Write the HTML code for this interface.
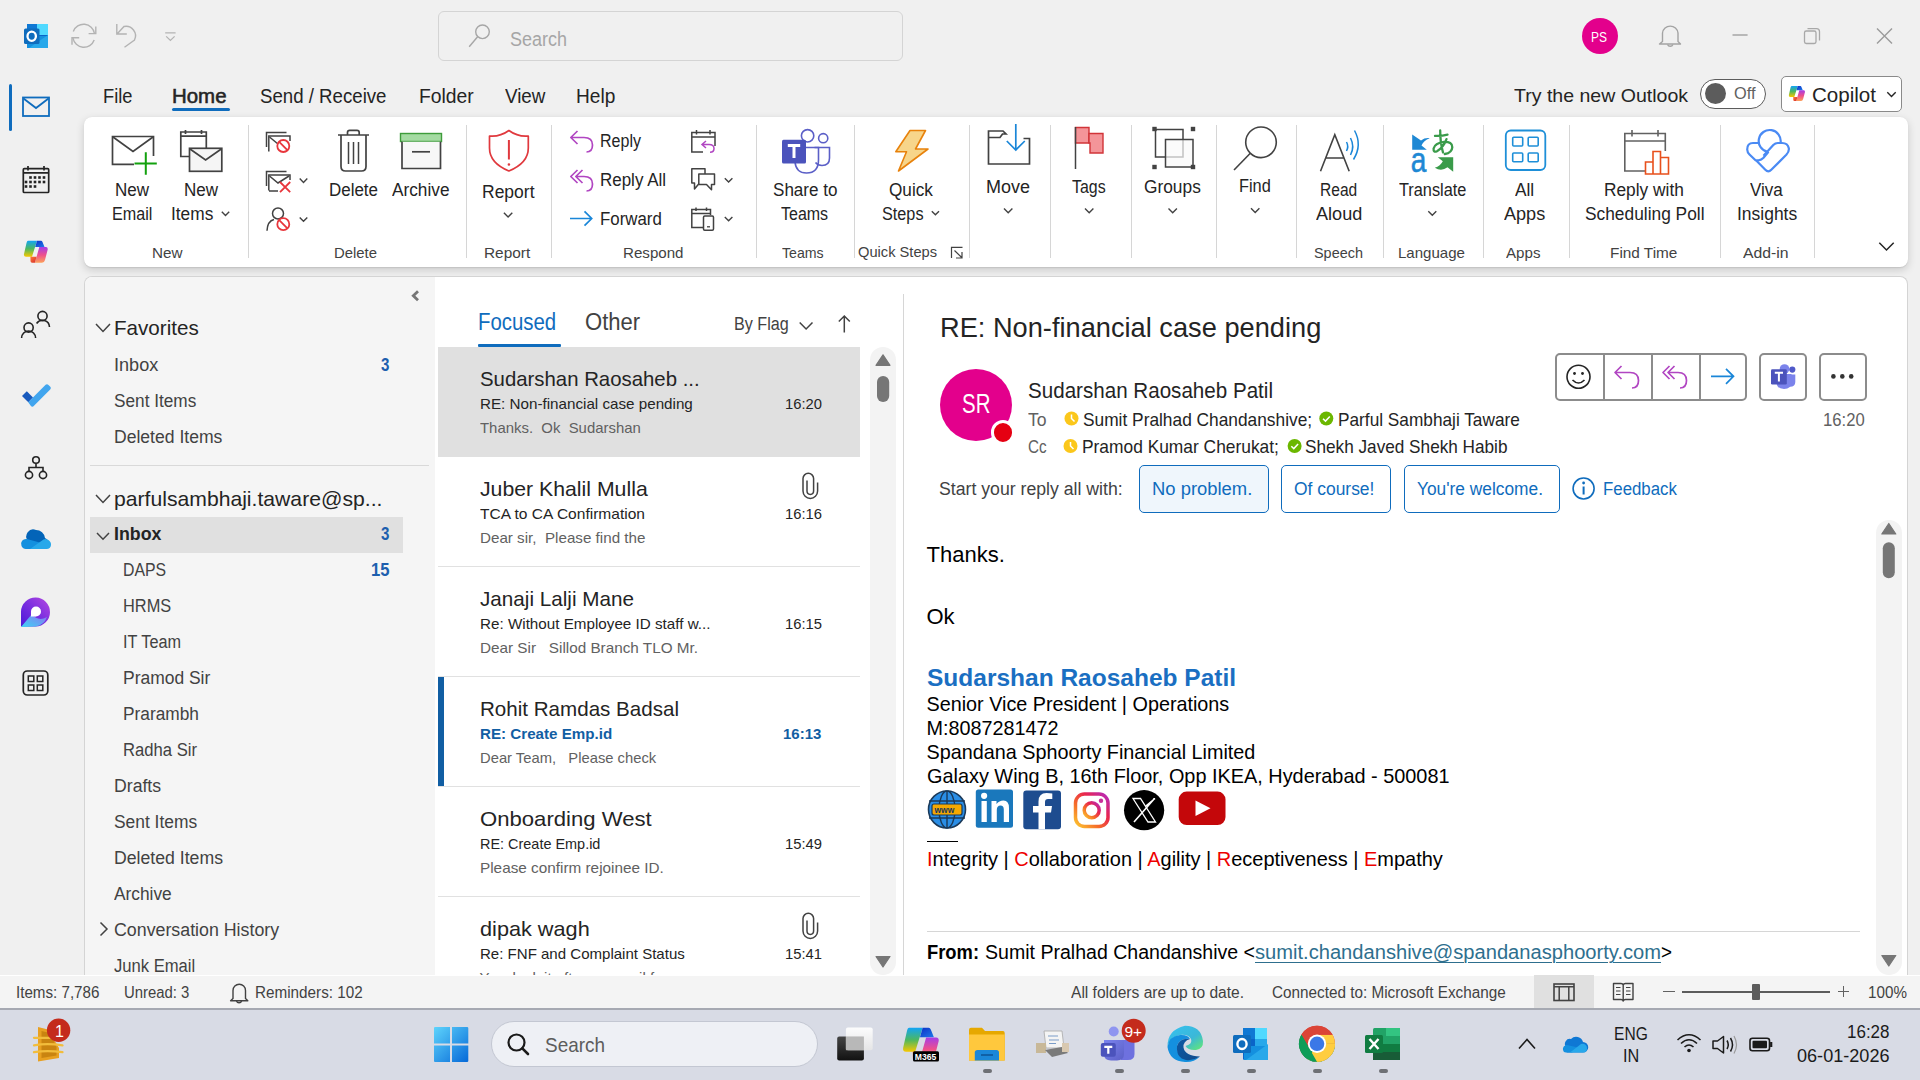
<!DOCTYPE html>
<html><head><meta charset="utf-8"><title>Outlook</title>
<style>
html,body{margin:0;padding:0;width:1920px;height:1080px;overflow:hidden;background:#f0f0f0;position:relative;font-family:"Liberation Sans",sans-serif}
.t{position:absolute;white-space:pre;font-family:"Liberation Sans",sans-serif}
.r{position:absolute;box-sizing:border-box}
svg.r{overflow:visible}
</style></head><body>
<div class="r" style="left:438px;top:11px;width:465px;height:50px;background:transparent;border:1px solid #d4d4d4;border-radius:6px"></div>
<div class="r" style="left:9px;top:84px;width:3px;height:47px;background:#0f6cbd;border-radius:2px"></div>
<div class="r" style="left:172px;top:108px;width:58px;height:3px;background:#0f6cbd;border-radius:2px"></div>
<div class="r" style="left:84px;top:117px;width:1824px;height:150px;background:#ffffff;border-radius:8px;box-shadow:0 0.5px 1px rgba(0,0,0,0.08), 0 3px 8px rgba(0,0,0,0.16)"></div>
<div class="r" style="left:84px;top:276px;width:1824px;height:700px;background:#ffffff;border:1px solid #d4d4d4;border-bottom:none;border-radius:8px 8px 0 0;overflow:hidden"></div>
<div class="r" style="left:85px;top:277px;width:350px;height:698px;background:#f5f5f5;border-radius:7px 0 0 0"></div>
<div class="t" style="left:510.0px;top:28.6px;font-size:20px;line-height:20px;color:#a6a6a6;font-weight:normal;transform:scaleX(0.8995);transform-origin:0 0;">Search</div>
<div class="r" style="left:1582px;top:18px;width:36px;height:36px;background:#e3008c;border-radius:50%"></div>
<div class="t" style="left:1590.5px;top:28.9px;font-size:15px;line-height:15px;color:#ffffff;font-weight:normal;transform:scaleX(0.7996);transform-origin:0 0;">PS</div>
<div class="t" style="left:103.0px;top:86.1px;font-size:20px;line-height:20px;color:#242424;font-weight:normal;transform:scaleX(0.9153);transform-origin:0 0;">File</div>
<div class="t" style="left:171.5px;top:86.1px;font-size:20px;line-height:20px;color:#242424;font-weight:normal;transform:scaleX(1.0215);transform-origin:0 0;-webkit-text-stroke:0.55px #242424">Home</div>
<div class="t" style="left:259.5px;top:86.1px;font-size:20px;line-height:20px;color:#242424;font-weight:normal;transform:scaleX(0.9326);transform-origin:0 0;">Send / Receive</div>
<div class="t" style="left:419.0px;top:86.1px;font-size:20px;line-height:20px;color:#242424;font-weight:normal;transform:scaleX(0.9657);transform-origin:0 0;">Folder</div>
<div class="t" style="left:504.6px;top:86.1px;font-size:20px;line-height:20px;color:#242424;font-weight:normal;transform:scaleX(0.9397);transform-origin:0 0;">View</div>
<div class="t" style="left:575.9px;top:86.1px;font-size:20px;line-height:20px;color:#242424;font-weight:normal;transform:scaleX(0.9554);transform-origin:0 0;">Help</div>
<div class="t" style="left:1514.4px;top:85.8px;font-size:19px;line-height:19px;color:#242424;font-weight:normal;transform:scaleX(1.0277);transform-origin:0 0;">Try the new Outlook</div>
<div class="r" style="left:1700px;top:79px;width:66px;height:30px;background:#ffffff;border:1px solid #5c5c5c;border-radius:15px"></div>
<div class="r" style="left:1705px;top:83px;width:21px;height:21px;background:#5c5c5c;border-radius:50%"></div>
<div class="t" style="left:1733.5px;top:85.9px;font-size:16px;line-height:16px;color:#616161;font-weight:normal;transform:scaleX(1.0215);transform-origin:0 0;">Off</div>
<div class="r" style="left:1781px;top:76px;width:121px;height:36px;background:#ffffff;border:1px solid #8a8a8a;border-radius:5px"></div>
<div class="t" style="left:1812.0px;top:86.3px;font-size:19.5px;line-height:19.5px;color:#242424;font-weight:normal;transform:scaleX(1.0543);transform-origin:0 0;">Copilot</div>
<div class="t" style="left:114.7px;top:182.0px;font-size:17.5px;line-height:17.5px;color:#242424;font-weight:normal;transform:scaleX(0.9712);transform-origin:0 0;">New</div>
<div class="t" style="left:112.3px;top:206.2px;font-size:17.5px;line-height:17.5px;color:#242424;font-weight:normal;transform:scaleX(0.9233);transform-origin:0 0;">Email</div>
<div class="t" style="left:184.0px;top:182.0px;font-size:17.5px;line-height:17.5px;color:#242424;font-weight:normal;transform:scaleX(0.9712);transform-origin:0 0;">New</div>
<div class="t" style="left:170.7px;top:206.2px;font-size:17.5px;line-height:17.5px;color:#242424;font-weight:normal;transform:scaleX(0.9886);transform-origin:0 0;">Items</div>
<div class="t" style="left:151.9px;top:245.3px;font-size:15px;line-height:15px;color:#424242;font-weight:normal;transform:scaleX(1.0164);transform-origin:0 0;">New</div>
<div class="t" style="left:329.0px;top:182.0px;font-size:17.5px;line-height:17.5px;color:#242424;font-weight:normal;transform:scaleX(0.9686);transform-origin:0 0;">Delete</div>
<div class="t" style="left:391.5px;top:182.0px;font-size:17.5px;line-height:17.5px;color:#242424;font-weight:normal;transform:scaleX(0.9854);transform-origin:0 0;">Archive</div>
<div class="t" style="left:334.0px;top:245.3px;font-size:15px;line-height:15px;color:#424242;font-weight:normal;transform:scaleX(0.9917);transform-origin:0 0;">Delete</div>
<div class="t" style="left:481.5px;top:184.1px;font-size:17.5px;line-height:17.5px;color:#242424;font-weight:normal;transform:scaleX(0.9995);transform-origin:0 0;">Report</div>
<div class="t" style="left:483.6px;top:244.9px;font-size:15px;line-height:15px;color:#424242;font-weight:normal;transform:scaleX(1.0262);transform-origin:0 0;">Report</div>
<div class="t" style="left:600.2px;top:133.0px;font-size:17.5px;line-height:17.5px;color:#242424;font-weight:normal;transform:scaleX(0.9164);transform-origin:0 0;">Reply</div>
<div class="t" style="left:600.2px;top:172.0px;font-size:17.5px;line-height:17.5px;color:#242424;font-weight:normal;transform:scaleX(0.9694);transform-origin:0 0;">Reply All</div>
<div class="t" style="left:600.2px;top:210.9px;font-size:17.5px;line-height:17.5px;color:#242424;font-weight:normal;transform:scaleX(0.9621);transform-origin:0 0;">Forward</div>
<div class="t" style="left:622.5px;top:244.9px;font-size:15px;line-height:15px;color:#424242;font-weight:normal;transform:scaleX(1.0076);transform-origin:0 0;">Respond</div>
<div class="t" style="left:772.5px;top:182.0px;font-size:17.5px;line-height:17.5px;color:#242424;font-weight:normal;transform:scaleX(0.9750);transform-origin:0 0;">Share to</div>
<div class="t" style="left:780.9px;top:205.9px;font-size:17.5px;line-height:17.5px;color:#242424;font-weight:normal;transform:scaleX(0.9138);transform-origin:0 0;">Teams</div>
<div class="t" style="left:782.3px;top:244.9px;font-size:15px;line-height:15px;color:#424242;font-weight:normal;transform:scaleX(0.9439);transform-origin:0 0;">Teams</div>
<div class="t" style="left:888.6px;top:182.0px;font-size:17.5px;line-height:17.5px;color:#242424;font-weight:normal;transform:scaleX(0.9814);transform-origin:0 0;">Quick</div>
<div class="t" style="left:881.7px;top:206.2px;font-size:17.5px;line-height:17.5px;color:#242424;font-weight:normal;transform:scaleX(0.9274);transform-origin:0 0;">Steps</div>
<div class="t" style="left:857.9px;top:243.8px;font-size:15px;line-height:15px;color:#424242;font-weight:normal;transform:scaleX(0.9782);transform-origin:0 0;">Quick Steps</div>
<div class="t" style="left:986.0px;top:179.0px;font-size:17.5px;line-height:17.5px;color:#242424;font-weight:normal;transform:scaleX(1.0282);transform-origin:0 0;">Move</div>
<div class="t" style="left:1071.7px;top:179.0px;font-size:17.5px;line-height:17.5px;color:#242424;font-weight:normal;transform:scaleX(0.9090);transform-origin:0 0;">Tags</div>
<div class="t" style="left:1143.5px;top:179.0px;font-size:17.5px;line-height:17.5px;color:#242424;font-weight:normal;transform:scaleX(0.9897);transform-origin:0 0;">Groups</div>
<div class="t" style="left:1239.0px;top:178.4px;font-size:17.5px;line-height:17.5px;color:#242424;font-weight:normal;transform:scaleX(0.9341);transform-origin:0 0;">Find</div>
<div class="t" style="left:1319.8px;top:182.0px;font-size:17.5px;line-height:17.5px;color:#242424;font-weight:normal;transform:scaleX(0.8892);transform-origin:0 0;">Read</div>
<div class="t" style="left:1315.5px;top:206.2px;font-size:17.5px;line-height:17.5px;color:#242424;font-weight:normal;transform:scaleX(1.0345);transform-origin:0 0;">Aloud</div>
<div class="t" style="left:1313.5px;top:245.3px;font-size:15px;line-height:15px;color:#424242;font-weight:normal;transform:scaleX(0.9612);transform-origin:0 0;">Speech</div>
<div class="t" style="left:1398.6px;top:182.0px;font-size:17.5px;line-height:17.5px;color:#242424;font-weight:normal;transform:scaleX(0.9322);transform-origin:0 0;">Translate</div>
<div class="t" style="left:1398.0px;top:245.3px;font-size:15px;line-height:15px;color:#424242;font-weight:normal;transform:scaleX(1.0039);transform-origin:0 0;">Language</div>
<div class="t" style="left:1515.4px;top:182.0px;font-size:17.5px;line-height:17.5px;color:#242424;font-weight:normal;transform:scaleX(0.9873);transform-origin:0 0;">All</div>
<div class="t" style="left:1504.3px;top:206.2px;font-size:17.5px;line-height:17.5px;color:#242424;font-weight:normal;transform:scaleX(1.0329);transform-origin:0 0;">Apps</div>
<div class="t" style="left:1506.0px;top:245.3px;font-size:15px;line-height:15px;color:#424242;font-weight:normal;transform:scaleX(1.0091);transform-origin:0 0;">Apps</div>
<div class="t" style="left:1603.7px;top:181.9px;font-size:17.5px;line-height:17.5px;color:#242424;font-weight:normal;transform:scaleX(0.9886);transform-origin:0 0;">Reply with</div>
<div class="t" style="left:1584.5px;top:206.2px;font-size:17.5px;line-height:17.5px;color:#242424;font-weight:normal;transform:scaleX(0.9906);transform-origin:0 0;">Scheduling Poll</div>
<div class="t" style="left:1609.7px;top:244.7px;font-size:15px;line-height:15px;color:#424242;font-weight:normal;transform:scaleX(1.0235);transform-origin:0 0;">Find Time</div>
<div class="t" style="left:1750.0px;top:181.9px;font-size:17.5px;line-height:17.5px;color:#242424;font-weight:normal;transform:scaleX(0.9725);transform-origin:0 0;">Viva</div>
<div class="t" style="left:1736.7px;top:206.2px;font-size:17.5px;line-height:17.5px;color:#242424;font-weight:normal;transform:scaleX(0.9982);transform-origin:0 0;">Insights</div>
<div class="t" style="left:1742.7px;top:244.7px;font-size:15px;line-height:15px;color:#424242;font-weight:normal;transform:scaleX(1.0517);transform-origin:0 0;">Add-in</div>
<div class="r" style="left:248px;top:125px;width:1px;height:133px;background:#d6d6d6;"></div>
<div class="r" style="left:466px;top:125px;width:1px;height:133px;background:#d6d6d6;"></div>
<div class="r" style="left:551px;top:125px;width:1px;height:133px;background:#d6d6d6;"></div>
<div class="r" style="left:756px;top:125px;width:1px;height:133px;background:#d6d6d6;"></div>
<div class="r" style="left:854px;top:125px;width:1px;height:133px;background:#d6d6d6;"></div>
<div class="r" style="left:969px;top:125px;width:1px;height:133px;background:#d6d6d6;"></div>
<div class="r" style="left:1050px;top:125px;width:1px;height:133px;background:#d6d6d6;"></div>
<div class="r" style="left:1131px;top:125px;width:1px;height:133px;background:#d6d6d6;"></div>
<div class="r" style="left:1216px;top:125px;width:1px;height:133px;background:#d6d6d6;"></div>
<div class="r" style="left:1296px;top:125px;width:1px;height:133px;background:#d6d6d6;"></div>
<div class="r" style="left:1383px;top:125px;width:1px;height:133px;background:#d6d6d6;"></div>
<div class="r" style="left:1483px;top:125px;width:1px;height:133px;background:#d6d6d6;"></div>
<div class="r" style="left:1569px;top:125px;width:1px;height:133px;background:#d6d6d6;"></div>
<div class="r" style="left:1720px;top:125px;width:1px;height:133px;background:#d6d6d6;"></div>
<div class="r" style="left:1814px;top:125px;width:1px;height:133px;background:#d6d6d6;"></div>
<div class="t" style="left:113.8px;top:316.6px;font-size:21px;line-height:21px;color:#242424;font-weight:normal;transform:scaleX(0.9808);transform-origin:0 0;">Favorites</div>
<div class="t" style="left:113.8px;top:356.3px;font-size:18px;line-height:18px;color:#424242;font-weight:normal;transform:scaleX(1.0060);transform-origin:0 0;">Inbox</div>
<div class="t" style="left:380.8px;top:356.3px;font-size:18px;line-height:18px;color:#1d5fae;font-weight:bold;transform:scaleX(0.8391);transform-origin:0 0;">3</div>
<div class="t" style="left:113.8px;top:391.9px;font-size:18px;line-height:18px;color:#424242;font-weight:normal;transform:scaleX(0.9565);transform-origin:0 0;">Sent Items</div>
<div class="t" style="left:113.8px;top:428.0px;font-size:18px;line-height:18px;color:#424242;font-weight:normal;transform:scaleX(0.9752);transform-origin:0 0;">Deleted Items</div>
<div class="r" style="left:90px;top:465px;width:339px;height:1px;background:#d9d9d9;"></div>
<div class="t" style="left:113.8px;top:488.0px;font-size:21px;line-height:21px;color:#242424;font-weight:normal;transform:scaleX(1.0073);transform-origin:0 0;">parfulsambhaji.taware@sp...</div>
<div class="r" style="left:90px;top:517px;width:313px;height:36px;background:#e0e0e0;"></div>
<div class="t" style="left:113.8px;top:525.0px;font-size:18px;line-height:18px;color:#242424;font-weight:bold;transform:scaleX(0.9875);transform-origin:0 0;">Inbox</div>
<div class="t" style="left:380.8px;top:525.0px;font-size:18px;line-height:18px;color:#1d5fae;font-weight:bold;transform:scaleX(0.8391);transform-origin:0 0;">3</div>
<div class="t" style="left:122.8px;top:560.7px;font-size:18px;line-height:18px;color:#424242;font-weight:normal;transform:scaleX(0.8793);transform-origin:0 0;">DAPS</div>
<div class="t" style="left:371.2px;top:560.7px;font-size:18px;line-height:18px;color:#1d5fae;font-weight:bold;transform:scaleX(0.9240);transform-origin:0 0;">15</div>
<div class="t" style="left:122.8px;top:596.8px;font-size:18px;line-height:18px;color:#424242;font-weight:normal;transform:scaleX(0.9095);transform-origin:0 0;">HRMS</div>
<div class="t" style="left:122.8px;top:632.8px;font-size:18px;line-height:18px;color:#424242;font-weight:normal;transform:scaleX(0.9027);transform-origin:0 0;">IT Team</div>
<div class="t" style="left:122.8px;top:668.8px;font-size:18px;line-height:18px;color:#424242;font-weight:normal;transform:scaleX(0.9697);transform-origin:0 0;">Pramod Sir</div>
<div class="t" style="left:122.8px;top:704.8px;font-size:18px;line-height:18px;color:#424242;font-weight:normal;transform:scaleX(0.9604);transform-origin:0 0;">Prarambh</div>
<div class="t" style="left:122.8px;top:740.8px;font-size:18px;line-height:18px;color:#424242;font-weight:normal;transform:scaleX(0.9245);transform-origin:0 0;">Radha Sir</div>
<div class="t" style="left:113.8px;top:776.8px;font-size:18px;line-height:18px;color:#424242;font-weight:normal;transform:scaleX(0.9811);transform-origin:0 0;">Drafts</div>
<div class="t" style="left:113.8px;top:812.8px;font-size:18px;line-height:18px;color:#424242;font-weight:normal;transform:scaleX(0.9658);transform-origin:0 0;">Sent Items</div>
<div class="t" style="left:113.8px;top:848.8px;font-size:18px;line-height:18px;color:#424242;font-weight:normal;transform:scaleX(0.9815);transform-origin:0 0;">Deleted Items</div>
<div class="t" style="left:113.8px;top:884.8px;font-size:18px;line-height:18px;color:#424242;font-weight:normal;transform:scaleX(0.9613);transform-origin:0 0;">Archive</div>
<div class="t" style="left:113.8px;top:920.8px;font-size:18px;line-height:18px;color:#424242;font-weight:normal;transform:scaleX(0.9883);transform-origin:0 0;">Conversation History</div>
<div class="t" style="left:113.8px;top:956.8px;font-size:18px;line-height:18px;color:#424242;font-weight:normal;transform:scaleX(0.9224);transform-origin:0 0;">Junk Email</div>
<div class="t" style="left:478.0px;top:310.6px;font-size:23px;line-height:23px;color:#0f6cbd;font-weight:normal;transform:scaleX(0.8864);transform-origin:0 0;">Focused</div>
<div class="r" style="left:478px;top:344px;width:83px;height:3px;background:#0f6cbd;border-radius:1px"></div>
<div class="t" style="left:584.6px;top:310.6px;font-size:23px;line-height:23px;color:#424242;font-weight:normal;transform:scaleX(0.9578);transform-origin:0 0;">Other</div>
<div class="t" style="left:734.3px;top:314.9px;font-size:18px;line-height:18px;color:#424242;font-weight:normal;transform:scaleX(0.8964);transform-origin:0 0;">By Flag</div>
<div class="r" style="left:438px;top:347px;width:422px;height:110px;background:#e0e0e0;"></div>
<div class="r" style="left:438px;top:677px;width:6px;height:109px;background:#115ea3;"></div>
<div class="r" style="left:438px;top:566px;width:422px;height:1px;background:#e1e1e1;"></div>
<div class="r" style="left:438px;top:676px;width:422px;height:1px;background:#e1e1e1;"></div>
<div class="r" style="left:438px;top:786px;width:422px;height:1px;background:#e1e1e1;"></div>
<div class="r" style="left:438px;top:896px;width:422px;height:1px;background:#e1e1e1;"></div>
<div class="t" style="left:479.6px;top:367.7px;font-size:21px;line-height:21px;color:#242424;font-weight:normal;transform:scaleX(0.9696);transform-origin:0 0;">Sudarshan Raosaheb ...</div>
<div class="t" style="left:479.6px;top:396.3px;font-size:15px;line-height:15px;color:#242424;font-weight:normal;transform:scaleX(1.0127);transform-origin:0 0;">RE: Non-financial case pending</div>
<div class="t" style="left:784.5px;top:396.3px;font-size:15px;line-height:15px;color:#242424;font-weight:normal;transform:scaleX(0.9857);transform-origin:0 0;">16:20</div>
<div class="t" style="left:479.6px;top:420.3px;font-size:15px;line-height:15px;color:#616161;font-weight:normal;transform:scaleX(0.9942);transform-origin:0 0;">Thanks.  Ok  Sudarshan</div>
<div class="t" style="left:479.6px;top:477.7px;font-size:21px;line-height:21px;color:#242424;font-weight:normal;transform:scaleX(1.0118);transform-origin:0 0;">Juber Khalil Mulla</div>
<div class="t" style="left:479.6px;top:506.3px;font-size:15px;line-height:15px;color:#242424;font-weight:normal;transform:scaleX(1.0363);transform-origin:0 0;">TCA to CA Confirmation</div>
<div class="t" style="left:784.5px;top:506.3px;font-size:15px;line-height:15px;color:#242424;font-weight:normal;transform:scaleX(0.9857);transform-origin:0 0;">16:16</div>
<div class="t" style="left:479.6px;top:530.3px;font-size:15px;line-height:15px;color:#616161;font-weight:normal;transform:scaleX(1.0121);transform-origin:0 0;">Dear sir,  Please find the</div>
<div class="t" style="left:479.6px;top:587.7px;font-size:21px;line-height:21px;color:#242424;font-weight:normal;transform:scaleX(0.9845);transform-origin:0 0;">Janaji Lalji Mane</div>
<div class="t" style="left:479.6px;top:616.3px;font-size:15px;line-height:15px;color:#242424;font-weight:normal;transform:scaleX(1.0140);transform-origin:0 0;">Re: Without Employee ID staff w...</div>
<div class="t" style="left:784.5px;top:616.3px;font-size:15px;line-height:15px;color:#242424;font-weight:normal;transform:scaleX(0.9857);transform-origin:0 0;">16:15</div>
<div class="t" style="left:479.6px;top:640.3px;font-size:15px;line-height:15px;color:#616161;font-weight:normal;transform:scaleX(1.0189);transform-origin:0 0;">Dear Sir   Sillod Branch TLO Mr.</div>
<div class="t" style="left:479.6px;top:697.7px;font-size:21px;line-height:21px;color:#242424;font-weight:normal;transform:scaleX(0.9798);transform-origin:0 0;">Rohit Ramdas Badsal</div>
<div class="t" style="left:479.6px;top:725.9px;font-size:15.5px;line-height:15.5px;color:#115ea3;font-weight:bold;transform:scaleX(0.9776);transform-origin:0 0;">RE: Create Emp.id</div>
<div class="t" style="left:783.0px;top:725.9px;font-size:15.5px;line-height:15.5px;color:#115ea3;font-weight:bold;transform:scaleX(0.9661);transform-origin:0 0;">16:13</div>
<div class="t" style="left:479.6px;top:750.3px;font-size:15px;line-height:15px;color:#616161;font-weight:normal;transform:scaleX(0.9845);transform-origin:0 0;">Dear Team,   Please check</div>
<div class="t" style="left:479.6px;top:807.7px;font-size:21px;line-height:21px;color:#242424;font-weight:normal;transform:scaleX(1.0531);transform-origin:0 0;">Onboarding West</div>
<div class="t" style="left:479.6px;top:836.3px;font-size:15px;line-height:15px;color:#242424;font-weight:normal;transform:scaleX(0.9629);transform-origin:0 0;">RE: Create Emp.id</div>
<div class="t" style="left:784.5px;top:836.3px;font-size:15px;line-height:15px;color:#242424;font-weight:normal;transform:scaleX(0.9857);transform-origin:0 0;">15:49</div>
<div class="t" style="left:479.6px;top:860.3px;font-size:15px;line-height:15px;color:#616161;font-weight:normal;transform:scaleX(1.0207);transform-origin:0 0;">Please confirm rejoinee ID.</div>
<div class="t" style="left:479.6px;top:917.7px;font-size:21px;line-height:21px;color:#242424;font-weight:normal;transform:scaleX(1.0325);transform-origin:0 0;">dipak wagh</div>
<div class="t" style="left:479.6px;top:946.3px;font-size:15px;line-height:15px;color:#242424;font-weight:normal;transform:scaleX(1.0027);transform-origin:0 0;">Re: FNF and Complaint Status</div>
<div class="t" style="left:784.5px;top:946.3px;font-size:15px;line-height:15px;color:#242424;font-weight:normal;transform:scaleX(0.9857);transform-origin:0 0;">15:41</div>
<div class="t" style="left:479.6px;top:970.3px;font-size:15px;line-height:15px;color:#616161;font-weight:normal;">Yes, look it after my  mail f</div>
<div class="r" style="left:903px;top:294px;width:1px;height:681px;background:#d6d6d6;"></div>
<div class="t" style="left:939.8px;top:314.4px;font-size:28px;line-height:28px;color:#242424;font-weight:normal;transform:scaleX(0.9721);transform-origin:0 0;">RE: Non-financial case pending</div>
<div class="r" style="left:940px;top:369px;width:72px;height:72px;background:#e3008c;border-radius:50%"></div>
<div class="t" style="left:961.5px;top:391.4px;font-size:27px;line-height:27px;color:#ffffff;font-weight:normal;transform:scaleX(0.7572);transform-origin:0 0;">SR</div>
<div class="r" style="left:990.5px;top:420px;width:24.5px;height:24.5px;background:#e50012;border-radius:50%;border:3px solid #ffffff"></div>
<div class="t" style="left:1028.4px;top:379.7px;font-size:22px;line-height:22px;color:#242424;font-weight:normal;transform:scaleX(0.9360);transform-origin:0 0;">Sudarshan Raosaheb Patil</div>
<div class="t" style="left:1028.4px;top:409.9px;font-size:19px;line-height:19px;color:#616161;font-weight:normal;transform:scaleX(0.9269);transform-origin:0 0;">To</div>
<div class="t" style="left:1028.4px;top:436.9px;font-size:19px;line-height:19px;color:#616161;font-weight:normal;transform:scaleX(0.8010);transform-origin:0 0;">Cc</div>
<div class="t" style="left:1082.6px;top:409.9px;font-size:19px;line-height:19px;color:#242424;font-weight:normal;transform:scaleX(0.9114);transform-origin:0 0;">Sumit Pralhad Chandanshive;</div>
<div class="t" style="left:1337.7px;top:409.9px;font-size:19px;line-height:19px;color:#242424;font-weight:normal;transform:scaleX(0.9076);transform-origin:0 0;">Parful Sambhaji Taware</div>
<div class="t" style="left:1082.0px;top:436.9px;font-size:19px;line-height:19px;color:#242424;font-weight:normal;transform:scaleX(0.9140);transform-origin:0 0;">Pramod Kumar Cherukat;</div>
<div class="t" style="left:1305.0px;top:436.9px;font-size:19px;line-height:19px;color:#242424;font-weight:normal;transform:scaleX(0.9043);transform-origin:0 0;">Shekh Javed Shekh Habib</div>
<div class="t" style="left:1823.2px;top:410.0px;font-size:19px;line-height:19px;color:#616161;font-weight:normal;transform:scaleX(0.8770);transform-origin:0 0;">16:20</div>
<div class="r" style="left:1555px;top:353px;width:192px;height:48px;background:#ffffff;border:2px solid #8c8c8c;border-radius:5px"></div>
<div class="r" style="left:1603px;top:354px;width:2px;height:46px;background:#8c8c8c;"></div>
<div class="r" style="left:1651px;top:354px;width:2px;height:46px;background:#8c8c8c;"></div>
<div class="r" style="left:1699px;top:354px;width:2px;height:46px;background:#8c8c8c;"></div>
<div class="r" style="left:1759px;top:353px;width:48px;height:48px;background:#ffffff;border:2px solid #8c8c8c;border-radius:5px"></div>
<div class="r" style="left:1819px;top:353px;width:48px;height:48px;background:#ffffff;border:2px solid #8c8c8c;border-radius:5px"></div>
<div class="t" style="left:938.7px;top:479.9px;font-size:18px;line-height:18px;color:#424242;font-weight:normal;transform:scaleX(0.9820);transform-origin:0 0;">Start your reply all with:</div>
<div class="r" style="left:1139px;top:465px;width:130px;height:48px;background:#eff6fc;border:1px solid #0f6cbd;border-radius:5px"></div>
<div class="t" style="left:1151.5px;top:479.9px;font-size:18px;line-height:18px;color:#0f6cbd;font-weight:normal;transform:scaleX(1.0230);transform-origin:0 0;">No problem.</div>
<div class="r" style="left:1281px;top:465px;width:110px;height:48px;background:#ffffff;border:1px solid #0f6cbd;border-radius:5px"></div>
<div class="t" style="left:1293.6px;top:479.9px;font-size:18px;line-height:18px;color:#0f6cbd;font-weight:normal;transform:scaleX(0.9683);transform-origin:0 0;">Of course!</div>
<div class="r" style="left:1404px;top:465px;width:156px;height:48px;background:#ffffff;border:1px solid #0f6cbd;border-radius:5px"></div>
<div class="t" style="left:1416.6px;top:479.9px;font-size:18px;line-height:18px;color:#0f6cbd;font-weight:normal;transform:scaleX(0.9630);transform-origin:0 0;">You're welcome.</div>
<div class="t" style="left:1602.7px;top:479.9px;font-size:18px;line-height:18px;color:#0f6cbd;font-weight:normal;transform:scaleX(0.9349);transform-origin:0 0;">Feedback</div>
<div class="t" style="left:926.5px;top:544.1px;font-size:22px;line-height:22px;color:#000000;font-weight:normal;">Thanks.</div>
<div class="t" style="left:926.5px;top:606.4px;font-size:22px;line-height:22px;color:#000000;font-weight:normal;">Ok</div>
<div class="t" style="left:927.0px;top:666.1px;font-size:24.5px;line-height:24.5px;color:#1a6fc2;font-weight:bold;">Sudarshan Raosaheb Patil</div>
<div class="t" style="left:926.5px;top:695.0px;font-size:19.8px;line-height:19.8px;color:#000000;font-weight:normal;">Senior Vice President | Operations</div>
<div class="t" style="left:926.5px;top:719.0px;font-size:19.8px;line-height:19.8px;color:#000000;font-weight:normal;">M:8087281472</div>
<div class="t" style="left:926.5px;top:743.0px;font-size:19.8px;line-height:19.8px;color:#000000;font-weight:normal;">Spandana Sphoorty Financial Limited</div>
<div class="t" style="left:926.5px;top:767.0px;font-size:19.8px;line-height:19.8px;color:#000000;font-weight:normal;transform:scaleX(1.0046);transform-origin:0 0;">Galaxy Wing B, 16th Floor, Opp IKEA, Hyderabad - 500081</div>
<div class="r" style="left:927px;top:841px;width:31px;height:1px;background:#000000;"></div>
<div class="t" style="left:926.5px;top:850.0px;font-size:19.8px;line-height:19.8px;color:#000000;font-weight:normal;transform:scaleX(1.0095);transform-origin:0 0;"><span style="color:#ee0000">I</span>ntegrity | <span style="color:#ee0000">C</span>ollaboration | <span style="color:#ee0000">A</span>gility | <span style="color:#ee0000">R</span>eceptiveness | <span style="color:#ee0000">E</span>mpathy</div>
<div class="r" style="left:927px;top:931px;width:933px;height:1px;background:#d6d6d6;"></div>
<div class="t" style="left:926.5px;top:943.3px;font-size:19.5px;line-height:19.5px;color:#000000;font-weight:bold;transform:scaleX(0.9413);transform-origin:0 0;">From:</div>
<div class="t" style="left:985.0px;top:943.3px;font-size:19.5px;line-height:19.5px;color:#000000;font-weight:normal;transform:scaleX(1.0023);transform-origin:0 0;">Sumit Pralhad Chandanshive &lt;</div>
<div class="t" style="left:1255.0px;top:943.3px;font-size:19.5px;line-height:19.5px;color:#2e6f8e;font-weight:normal;transform:scaleX(1.0320);transform-origin:0 0;text-decoration:underline;text-decoration-thickness:1px;text-underline-offset:3px">sumit.chandanshive@spandanasphoorty.com</div>
<div class="t" style="left:1661.0px;top:943.3px;font-size:19.5px;line-height:19.5px;color:#000000;font-weight:normal;transform:scaleX(0.9660);transform-origin:0 0;">&gt;</div>
<div class="r" style="left:0px;top:975px;width:1920px;height:33px;background:#f4f4f4;border-top:1px solid #ffffff"></div>
<div class="t" style="left:16.0px;top:984.6px;font-size:16px;line-height:16px;color:#424242;font-weight:normal;transform:scaleX(0.9472);transform-origin:0 0;">Items: 7,786</div>
<div class="t" style="left:123.6px;top:984.6px;font-size:16px;line-height:16px;color:#424242;font-weight:normal;transform:scaleX(0.9308);transform-origin:0 0;">Unread: 3</div>
<div class="t" style="left:254.8px;top:984.6px;font-size:16px;line-height:16px;color:#424242;font-weight:normal;transform:scaleX(0.9536);transform-origin:0 0;">Reminders: 102</div>
<div class="t" style="left:1070.8px;top:984.6px;font-size:16px;line-height:16px;color:#424242;font-weight:normal;transform:scaleX(0.9726);transform-origin:0 0;">All folders are up to date.</div>
<div class="t" style="left:1272.0px;top:984.6px;font-size:16px;line-height:16px;color:#424242;font-weight:normal;transform:scaleX(0.9555);transform-origin:0 0;">Connected to: Microsoft Exchange</div>
<div class="r" style="left:1534px;top:975px;width:60px;height:33px;background:#e0e0e0;"></div>
<div class="t" style="left:1867.8px;top:984.6px;font-size:16px;line-height:16px;color:#424242;font-weight:normal;transform:scaleX(0.9506);transform-origin:0 0;">100%</div>
<div class="r" style="left:1682px;top:991px;width:148px;height:1.5px;background:#5c5c5c;"></div>
<div class="r" style="left:1752.3px;top:983.5px;width:7.7px;height:16.2px;background:#5c5c5c;border-radius:1px"></div>
<div class="r" style="left:1663px;top:991px;width:12px;height:1px;background:#616161;"></div>
<div class="r" style="left:1838px;top:991px;width:11px;height:1px;background:#616161;"></div>
<div class="r" style="left:1843px;top:986px;width:1px;height:11px;background:#616161;"></div>
<div class="r" style="left:0px;top:1008px;width:1920px;height:72px;background:#d8dbe5;border-top:2px solid #a6a9b2"></div>
<div class="r" style="left:491px;top:1021px;width:327px;height:46px;background:#eef0f5;border:1px solid #c3c7d2;border-radius:23px"></div>
<div class="t" style="left:544.5px;top:1033.9px;font-size:21px;line-height:21px;color:#5c5c5c;font-weight:normal;transform:scaleX(0.9017);transform-origin:0 0;">Search</div>
<div class="t" style="left:1614.0px;top:1024.8px;font-size:18px;line-height:18px;color:#1a1a1a;font-weight:normal;transform:scaleX(0.8652);transform-origin:0 0;">ENG</div>
<div class="t" style="left:1622.8px;top:1047.3px;font-size:18px;line-height:18px;color:#1a1a1a;font-weight:normal;transform:scaleX(0.9028);transform-origin:0 0;">IN</div>
<div class="t" style="left:1847.0px;top:1022.8px;font-size:18px;line-height:18px;color:#1a1a1a;font-weight:normal;transform:scaleX(0.9435);transform-origin:0 0;">16:28</div>
<div class="t" style="left:1797.0px;top:1046.8px;font-size:18px;line-height:18px;color:#1a1a1a;font-weight:normal;transform:scaleX(1.0046);transform-origin:0 0;">06-01-2026</div>
<div class="r" style="left:870px;top:347px;width:26px;height:628px;background:#f3f3f3;border-radius:13px"></div>
<div class="r" style="left:1876px;top:520px;width:26px;height:455px;background:#f3f3f3;border-radius:13px"></div>
<div class="r" style="left:983px;top:1068.5px;width:9px;height:4px;background:#6e7075;border-radius:2px"></div>
<div class="r" style="left:1115px;top:1068.5px;width:9px;height:4px;background:#6e7075;border-radius:2px"></div>
<div class="r" style="left:1181px;top:1068.5px;width:9px;height:4px;background:#6e7075;border-radius:2px"></div>
<div class="r" style="left:1247px;top:1068.5px;width:9px;height:4px;background:#6e7075;border-radius:2px"></div>
<div class="r" style="left:1313px;top:1068.5px;width:9px;height:4px;background:#6e7075;border-radius:2px"></div>
<div class="r" style="left:1379px;top:1068.5px;width:9px;height:4px;background:#6e7075;border-radius:2px"></div>
<svg style="position:absolute;left:0;top:0;overflow:visible" width="1920" height="1080" viewBox="0 0 1920 1080" fill="none"><rect x="27" y="24" width="21" height="24" rx="1.5" fill="#0a64c8"/>
<rect x="37" y="24" width="11" height="11" fill="#50d9ff"/>
<rect x="27" y="24" width="10" height="11" fill="#0f78d4"/>
<path d="M27 36 L48 36 L48 48 L27 48 Z" fill="#1490df"/>
<path d="M29 48 L48 35 L48 48 Z" fill="#28a8ea"/>
<rect x="24" y="28.5" width="15.5" height="15.5" rx="1.5" fill="#0f6cbd"/>
<ellipse cx="31.7" cy="36.2" rx="4.2" ry="4.6" stroke="#ffffff" stroke-width="2.3"/>
<path d="M94.5 33.5 A11 11 0 0 0 73.3 31.5 M73 38 A11 11 0 0 0 94.2 40" stroke="#b3b3b3" stroke-width="1.4"/>
<path d="M95.8 26.5 V33.6 H88.6 M72 44.8 V37.8 H79.2" stroke="#b3b3b3" stroke-width="1.4"/>
<path d="M116.8 24 V34 H126.8 M117.5 33.5 L124 26.5 A9.5 9.5 0 0 1 134.5 40 L124.5 47.3" stroke="#b3b3b3" stroke-width="1.4"/>
<path d="M165.2 32.8 H175.6 M166.2 36.4 L170.4 40.4 L174.6 36.4" stroke="#b3b3b3" stroke-width="1.3"/>
<circle cx="482.5" cy="31.8" r="6.8" stroke="#a6a6a6" stroke-width="1.4"/><path d="M477.6 36.7 L469.2 46.7" stroke="#a6a6a6" stroke-width="1.4"/>
<path d="M1662.5 41.5 V33 A7.8 7.8 0 0 1 1678 33 V41.5 L1680.5 44 H1659.5 Z" stroke="#a3a3a3" stroke-width="1.4" stroke-linejoin="round"/><path d="M1667.5 44.5 A3 3 0 0 0 1673 44.5" stroke="#a3a3a3" stroke-width="1.4"/>
<path d="M1732.5 35 H1747.6" stroke="#9a9a9a" stroke-width="1.3"/>
<rect x="1804.5" y="31" width="11.5" height="12.5" rx="1.8" stroke="#a8a8a8" stroke-width="1.3"/><path d="M1807.5 28.6 H1816.5 A3 3 0 0 1 1819.5 31.6 V40.5" stroke="#a8a8a8" stroke-width="1.3"/>
<path d="M1877 28.5 L1892 43.5 M1892 28.5 L1877 43.5" stroke="#9a9a9a" stroke-width="1.4"/>
<defs><linearGradient id="cgL" x1="0" y1="0" x2="0" y2="1"><stop offset="0" stop-color="#12a4f5"/><stop offset="0.5" stop-color="#4cb860"/><stop offset="1" stop-color="#f7c800"/></linearGradient><linearGradient id="cgC" x1="0" y1="0" x2="1" y2="1"><stop offset="0" stop-color="#0b2fc8"/><stop offset="1" stop-color="#1e7ae8"/></linearGradient><linearGradient id="cgR" x1="0" y1="0" x2="0" y2="1"><stop offset="0" stop-color="#a53de8"/><stop offset="0.5" stop-color="#ee4f8c"/><stop offset="1" stop-color="#fda25a"/></linearGradient><linearGradient id="cgB" x1="0" y1="0" x2="1" y2="1"><stop offset="0" stop-color="#ff7a3a"/><stop offset="1" stop-color="#d42a2a"/></linearGradient><g id="copi"><path d="M4.1 0 H13.1 L8.1 16 H2.1 Q-0.4 16 0.1 13.3 L2.6 2.3 Q3.1 0 4.1 0 Z" fill="url(#cgL)"/><path d="M13.1 0 H17.1 Q18.1 0 18.6 1.3 L20.6 6.3 H11.3 Z" fill="url(#cgC)"/><path d="M15.4 6.4 H22.1 Q24.1 6.4 23.8 8.8 L21.1 19.3 Q20.4 22.1 18.1 22.1 H11 Z" fill="url(#cgR)"/><path d="M6.5 16 H12.7 L11 22.1 H8.1 Q6.7 22.1 6.6 20.3 Z" fill="url(#cgB)"/></g></defs>
<use href="#copi" transform="translate(1788.8 86) scale(0.68)"/>
<path d="M1887.3 92.3 L1891.5 96.5 L1895.7 92.3" stroke="#242424" stroke-width="1.4"/>
<rect x="23" y="97.5" width="26" height="18.5" stroke="#0f6cbd" stroke-width="1.8"/><path d="M23.5 98.5 L36 108 L48.5 98.5" stroke="#0f6cbd" stroke-width="1.8"/>
<rect x="23.3" y="168.7" width="25.4" height="23.8" rx="1" stroke="#242424" stroke-width="1.7"/><path d="M23.3 172.8 H48.7 M28 166 V170.5 M44 166 V170.5" stroke="#242424" stroke-width="1.7"/>
<rect x="29.2" y="176.2" width="2.6" height="2.6" fill="#242424"/>
<rect x="33.7" y="176.2" width="2.6" height="2.6" fill="#242424"/>
<rect x="38.2" y="176.2" width="2.6" height="2.6" fill="#242424"/>
<rect x="42.7" y="176.2" width="2.6" height="2.6" fill="#242424"/>
<rect x="24.7" y="180.7" width="2.6" height="2.6" fill="#242424"/>
<rect x="29.2" y="180.7" width="2.6" height="2.6" fill="#242424"/>
<rect x="33.7" y="180.7" width="2.6" height="2.6" fill="#242424"/>
<rect x="38.2" y="180.7" width="2.6" height="2.6" fill="#242424"/>
<rect x="42.7" y="180.7" width="2.6" height="2.6" fill="#242424"/>
<rect x="24.7" y="185.2" width="2.6" height="2.6" fill="#242424"/>
<rect x="29.2" y="185.2" width="2.6" height="2.6" fill="#242424"/>
<rect x="33.7" y="185.2" width="2.6" height="2.6" fill="#242424"/>
<use href="#copi" transform="translate(23.9 240.7)"/>
<circle cx="28.6" cy="327.5" r="4.6" stroke="#242424" stroke-width="1.6"/><path d="M21.6 338 A7 7 0 0 1 35.6 338" stroke="#242424" stroke-width="1.6"/><circle cx="42.5" cy="316" r="4.6" stroke="#242424" stroke-width="1.6"/><path d="M36.6 323.5 A7 7 0 0 1 49.5 327" stroke="#242424" stroke-width="1.6"/>
<path d="M22 396 L26.8 391.3 L33 397.5 L28.3 402.2 Z" fill="#185abd"/><path d="M28.2 402.3 L45.6 384.8 Q47 383.5 48.5 384.9 L50.3 386.7 Q51.6 388 50.2 389.5 L34 405.8 Q32.4 407.5 30.7 405.8 Z" fill="#41a5ee"/>
<circle cx="36" cy="460" r="3.3" stroke="#242424" stroke-width="1.6"/><circle cx="29" cy="475" r="3.6" stroke="#242424" stroke-width="1.6"/><circle cx="43" cy="475" r="3.6" stroke="#242424" stroke-width="1.6"/><path d="M36 463.5 V467.5 M29 471.3 V467.5 H43 V471.3" stroke="#242424" stroke-width="1.6"/>
<path d="M28 541 A7 7 0 0 1 36 530 A9 9 0 0 1 45 538 A6 6 0 0 1 45 549 H26 A5.5 5.5 0 0 1 28 541 Z" fill="#0364b8"/><path d="M21.5 546 A5 5 0 0 1 27 539 L45 544 A6 6 0 0 1 45 549 H26 A5 5 0 0 1 21.5 546 Z" fill="#1490df"/><path d="M30 549 L43.5 539.5 A5.5 5.5 0 0 1 51 545 A4.5 4.5 0 0 1 46.5 549 Z" fill="#28a8ea"/>
<defs><linearGradient id="lpA" x1="0" y1="1" x2="1" y2="0"><stop offset="0" stop-color="#4a18d8"/><stop offset="0.5" stop-color="#7a2ee0"/><stop offset="1" stop-color="#b548e0"/></linearGradient><linearGradient id="lpB" x1="0" y1="1" x2="1" y2="0"><stop offset="0" stop-color="#3ad6f5"/><stop offset="1" stop-color="#8f6ff0"/></linearGradient></defs>
<path d="M21 627 V611.5 A14.5 14.5 0 1 1 35.5 626.5 H21 Z" fill="url(#lpA)"/><path d="M21 627 L32 614 Q38 622 47 617 A14.5 14.5 0 0 1 35.5 626.5 Z" fill="url(#lpB)"/><circle cx="36" cy="611.5" r="5" fill="#ffffff"/><path d="M31 611.5 V616.5 H36" fill="#ffffff"/>
<rect x="23.3" y="671" width="24.5" height="24" rx="4" stroke="#242424" stroke-width="1.7"/><rect x="28.3" y="676" width="5.5" height="5.5" stroke="#242424" stroke-width="1.5"/><rect x="37.3" y="676" width="5.5" height="5.5" stroke="#242424" stroke-width="1.5"/><rect x="28.3" y="685" width="5.5" height="5.5" stroke="#242424" stroke-width="1.5"/><rect x="37.3" y="685" width="5.5" height="5.5" stroke="#242424" stroke-width="1.5"/>
<path d="M134 164.3 H112.5 V136.5 H153.5 V156" stroke="#424242" stroke-width="1.7"/><path d="M113 137 L133 151.5 L153 137" stroke="#424242" stroke-width="1.7"/>
<path d="M145.8 152.2 V174.8 M134.5 163.5 H156.8" stroke="#13a10e" stroke-width="2"/>
<path d="M189 156.5 H180.8 V132 H206.3 V148" stroke="#424242" stroke-width="1.7"/><path d="M180.8 136.2 H206.3 M185.5 130 V134 M201.5 130 V134" stroke="#424242" stroke-width="1.7"/>
<rect x="189.5" y="148.3" width="32.3" height="23" fill="#f5f5f5" stroke="#424242" stroke-width="1.7"/><path d="M190 149 L205.6 160 L221.3 149" stroke="#424242" stroke-width="1.7"/>
<path d="M221.8 211.8 L225.5 215.5 L229.2 211.8" stroke="#424242" stroke-width="1.4"/>
<path d="M266.5 147 V132.5 H286.5 M268.8 151.5 V136 H290 V141" stroke="#424242" stroke-width="1.5"/><path d="M269.5 137 L278 144" stroke="#424242" stroke-width="1.5"/>
<circle cx="283.3" cy="146" r="6" stroke="#e8363c" stroke-width="1.8" fill="#ffffff"/><path d="M279.2 141.9 L287.4 150.1" stroke="#e8363c" stroke-width="1.8"/>
<path d="M266.5 186 V171.5 H286.5 M268.8 190.5 V175 H290 V180 M269 191 H278" stroke="#424242" stroke-width="1.5"/><path d="M269.5 176 L278 183 L289 176" stroke="#424242" stroke-width="1.5"/>
<path d="M280 182 L290.2 192.2 M290.2 182 L280 192.2" stroke="#e8363c" stroke-width="1.8"/>
<path d="M299.7 178.6 L303.5 182.4 L307.3 178.6" stroke="#424242" stroke-width="1.4"/>
<circle cx="278" cy="213.5" r="5.5" stroke="#424242" stroke-width="1.5"/><path d="M267 230.8 Q267.5 221 274 219.5" stroke="#424242" stroke-width="1.5"/>
<circle cx="283.3" cy="224.2" r="6" stroke="#e8363c" stroke-width="1.8" fill="#ffffff"/><path d="M279.2 220.1 L287.4 228.3" stroke="#e8363c" stroke-width="1.8"/>
<path d="M299.7 217.4 L303.5 221.2 L307.3 217.4" stroke="#424242" stroke-width="1.4"/>
<path d="M338 135 H369 M347.5 135 V132.5 Q347.5 130.3 349.7 130.3 H357 Q359.2 130.3 359.2 132.5 V135" stroke="#424242" stroke-width="1.7"/><path d="M341 135 V166.5 Q341 171 345.5 171 H361.5 Q366 171 366 166.5 V135" stroke="#424242" stroke-width="1.7"/><path d="M348.5 142 V164 M353.5 142 V164 M358.5 142 V164" stroke="#424242" stroke-width="1.5"/>
<rect x="400.5" y="133.5" width="41" height="8" fill="#a4dba2" stroke="#3e9c3b" stroke-width="1.4"/>
<path d="M402 141.7 V168.5 H440.5 V141.7" fill="#f7f7f7" stroke="#424242" stroke-width="1.7"/><path d="M412 151.8 H430" stroke="#424242" stroke-width="1.7"/>
<path d="M508.9 130.5 Q500 137 489.5 136 V148 Q489.5 163 508.9 171 Q528.3 163 528.3 148 V136 Q517.8 137 508.9 130.5 Z" stroke="#e0393e" stroke-width="1.7" stroke-linejoin="round"/><path d="M508.9 140 V159.5" stroke="#e0393e" stroke-width="2"/><circle cx="508.9" cy="164.5" r="1.3" fill="#e0393e"/>
<path d="M503.9 212.8 L508.1 217 L512.3 212.8" stroke="#424242" stroke-width="1.4"/>
<path d="M577.5 131 L570.8 137.5 L577.5 144 M571.2 137.5 H584 Q592.5 137.5 592.5 145 Q592.5 152 586.5 152" stroke="#b146c2" stroke-width="1.7" stroke-linejoin="round"/>
<path d="M577.5 170 L570.8 176.5 L577.5 183 M582.5 170 L575.8 176.5 L582.5 183 M576.2 176.5 H584 Q592.5 176.5 592.5 184 Q592.5 191 586.5 191" stroke="#b146c2" stroke-width="1.7" stroke-linejoin="round"/>
<path d="M570 218.5 H591.5 M584.5 211.3 L591.7 218.5 L584.5 225.7" stroke="#1a86d8" stroke-width="1.7"/>
<path d="M703 152 H691.8 V132.5 H715 V146 M691.8 137 H715 M696.5 130 V134.5 M710 130 V134.5" stroke="#424242" stroke-width="1.5"/>
<path d="M706 141 L702 144.5 L706 148 M702.5 144.5 H709 Q714 144.5 714 148.5 Q714 152.3 710 152.3" stroke="#b146c2" stroke-width="1.5"/>
<path d="M705 176 V168.8 H691.8 V183 H694.5 V189 L699.5 183 H705" stroke="#424242" stroke-width="1.5" stroke-linejoin="round"/><path d="M698.8 174 H714.5 V184.5 H711.5 V189.8 L706.5 184.5 H698.8 Z" fill="#ffffff" stroke="#424242" stroke-width="1.5" stroke-linejoin="round"/>
<path d="M724.8 178.2 L728.6 182 L732.4 178.2" stroke="#424242" stroke-width="1.4"/>
<path d="M703.5 227.5 H691.8 V209.5 H710.5 V215 M691.8 213.5 H710.5 M696 207.5 V211 M706.5 207.5 V211" stroke="#424242" stroke-width="1.5"/><rect x="703.5" y="216" width="10" height="14.3" rx="1.2" fill="#ffffff" stroke="#424242" stroke-width="1.5"/><path d="M707 226.8 H710" stroke="#424242" stroke-width="1.3"/>
<path d="M724.8 217 L728.6 220.8 L732.4 217" stroke="#424242" stroke-width="1.4"/>
<circle cx="823.2" cy="138.2" r="4.6" stroke="#5b5fc7" stroke-width="1.6"/><path d="M814.5 147.5 H829.5 V158 Q829.5 165.5 822 165.5 Q818 165.5 815.5 162.5" stroke="#5b5fc7" stroke-width="1.6"/>
<circle cx="807.6" cy="135.8" r="6.2" stroke="#5b5fc7" stroke-width="1.6"/><path d="M797 147.5 H818.5 V160 Q818.5 173 806.5 173 Q796 173 795 162" stroke="#5b5fc7" stroke-width="1.6"/>
<rect x="782" y="139.8" width="24" height="23.8" rx="1.5" fill="#4b53bc"/><path d="M787.8 145.5 H800.2 M794 145.5 V158" stroke="#ffffff" stroke-width="3"/>
<path d="M910 130.5 H925.5 L915.5 149 H928 L898.5 171 L906.5 151.8 H895.8 Z" fill="#f7d58a" stroke="#e8820c" stroke-width="1.6" stroke-linejoin="round"/>
<path d="M931.8 211.2 L935.4 214.8 L939 211.2" stroke="#424242" stroke-width="1.4"/>
<path d="M951.5 258 V247.3 H962.5 M954.5 250.5 L962 257.8 M962 252 V258 H956" stroke="#424242" stroke-width="1.2"/>
<path d="M988.5 145 V131 H1003 L1006 134 H1002.5 L1000 137.5 H988.5 M988.5 137.5 V164 H1029.5 V138.5 H1023.5" stroke="#424242" stroke-width="1.7"/>
<path d="M1015.8 124 V150 M1006.8 141 L1015.8 150 L1024.8 141" stroke="#1a86d8" stroke-width="1.7"/>
<path d="M1004 208.5 L1008.2 212.7 L1012.4 208.5" stroke="#424242" stroke-width="1.4"/>
<path d="M1075.5 127.5 H1089 V143 H1075.5 Z" fill="#f49599" stroke="#d13438" stroke-width="1.4"/><path d="M1089 133.5 H1103 V153 H1090 V143 H1089 Z" fill="#f49599" stroke="#d13438" stroke-width="1.4"/>
<path d="M1075.5 127 V169" stroke="#424242" stroke-width="1.5"/>
<path d="M1085 208.5 L1089.2 212.7 L1093.4 208.5" stroke="#424242" stroke-width="1.4"/>
<rect x="1155.5" y="129.5" width="27.5" height="27.5" stroke="#424242" stroke-width="1.5"/><rect x="1165.5" y="139.5" width="27.5" height="27.5" fill="#fafafa" fill-opacity="0.7" stroke="#424242" stroke-width="1.5"/>
<rect x="1152.3" y="126.8" width="4.4" height="4.4" fill="#424242"/>
<rect x="1190.8" y="126.8" width="4.4" height="4.4" fill="#424242"/>
<rect x="1152.3" y="164.8" width="4.4" height="4.4" fill="#424242"/>
<rect x="1190.8" y="164.8" width="4.4" height="4.4" fill="#424242"/>
<path d="M1168.5 208.5 L1172.7 212.7 L1176.9 208.5" stroke="#424242" stroke-width="1.4"/>
<circle cx="1261" cy="142.3" r="15.3" stroke="#424242" stroke-width="1.6"/><path d="M1250.3 153.2 L1234 170" stroke="#424242" stroke-width="1.6"/>
<path d="M1251 208.2 L1255.2 212.4 L1259.4 208.2" stroke="#424242" stroke-width="1.4"/>
<path d="M1320.5 171.2 L1334.8 134.8 L1349.2 171.2 M1325.7 158 H1344" stroke="#424242" stroke-width="1.6"/>
<path d="M1346.5 142 Q1349 146.5 1346.5 151 M1350.5 138 Q1355 146.5 1350.5 155 M1354.5 130.5 Q1362.5 145 1353.5 159.5" stroke="#1a86d8" stroke-width="1.5"/>
<path d="M1412.2 134.5 L1421 140.5 Q1425 137.5 1429.8 138.2 Q1423.5 140.5 1421.5 145.5 L1426.8 149.8 H1412.2 Z" fill="#1e88d4"/>
<text x="1410.8" y="171.6" font-family="Liberation Sans" font-size="35" fill="#1e88d4" stroke="#1e88d4" stroke-width="0.6" transform="translate(1410.8 0) scale(0.8 1) translate(-1410.8 0)">a</text>
<path d="M1435 135.8 Q1441 136.3 1447.5 134.6 M1440.2 130.5 Q1440.2 143 1443 152.3 M1446.5 139.2 Q1443.5 147.5 1437 151.2 Q1433.2 153 1433.6 148.5 Q1435 142.8 1444 141.8 Q1452.3 141.5 1452.3 147.2 Q1452 152.8 1444.8 154" stroke="#3a9b4a" stroke-width="2.3" stroke-linecap="round" stroke-linejoin="round"/>
<path d="M1453.2 157.2 V171.8 L1447.5 167.3 Q1441.5 171.8 1434.8 167.8 Q1440.5 166 1442.8 161.2 L1437.8 157.2 Z" fill="#3a9b4a"/>
<path d="M1428.3 211.2 L1432.3 215.2 L1436.3 211.2" stroke="#424242" stroke-width="1.4"/>
<rect x="1505.8" y="130.5" width="39.5" height="39.5" rx="5" stroke="#1e8fd8" stroke-width="1.8"/>
<rect x="1512.7" y="137.2" width="10" height="8.8" rx="1" stroke="#1e8fd8" stroke-width="1.6"/>
<rect x="1528.2" y="137.2" width="10" height="8.8" rx="1" stroke="#1e8fd8" stroke-width="1.6"/>
<rect x="1512.7" y="153.0" width="10" height="8.8" rx="1" stroke="#1e8fd8" stroke-width="1.6"/>
<rect x="1528.2" y="153.0" width="10" height="8.8" rx="1" stroke="#1e8fd8" stroke-width="1.6"/>
<path d="M1645 171 H1624.8 V133.5 H1665.3 V151 M1624.8 141 H1665.3 M1632 130 V136.5 M1658 130 V136.5" stroke="#616161" stroke-width="1.6"/>
<path d="M1645.5 174 V162 H1653 V151.5 H1660.5 V157.5 H1668.5 V174 Z M1653 174 V162 M1660.5 174 V157.5" fill="#ffffff" stroke="#e8501c" stroke-width="1.6"/>
<path d="M1767.5 151.8 A11 11 0 1 1 1780.6 142.6" stroke="#4a8af4" stroke-width="2.2"/>
<path d="M1758.4 143 H1753 Q1747.2 143 1747.2 149.5 Q1747.3 152.3 1749.5 154.5 L1755.5 160.3 H1758.5 Q1761.5 160 1763.5 157.8 L1768.5 151.8" stroke="#4a8af4" stroke-width="2.2" stroke-linejoin="round"/>
<path d="M1756.5 160.8 L1765.3 169.8 Q1768.3 172.8 1771.3 169.8 L1786.3 154.8 Q1789.3 151.5 1788.8 148.2 Q1787.8 143 1782 143 H1777.8 Q1775.3 143 1773.3 145 L1763.5 155.8" stroke="#4a8af4" stroke-width="2.2" stroke-linejoin="round"/>
<path d="M1879.3 242.8 L1886.5 250 L1893.7 242.8" stroke="#242424" stroke-width="1.5"/>
<path d="M418 291.3 L413.3 295.8 L418 300.3" stroke="#767676" stroke-width="2.8" stroke-linejoin="miter"/>
<path d="M96 324 L103 331.5 L110 324" stroke="#424242" stroke-width="1.5"/>
<path d="M96 495 L103 502.5 L110 495" stroke="#424242" stroke-width="1.5"/>
<path d="M97 533 L103 539.2 L109 533" stroke="#424242" stroke-width="1.5"/>
<path d="M100.5 922.5 L107 929 L100.5 935.5" stroke="#424242" stroke-width="1.5"/>
<path d="M799.7 322.5 L806.1 329 L812.5 322.5" stroke="#424242" stroke-width="1.5"/>
<path d="M844.3 316 V332.5 M838.8 321.5 L844.3 316 L849.8 321.5" stroke="#424242" stroke-width="1.5"/>
<path d="M883 354.8 L890 365.3 H876 Z" fill="#767676" stroke="#767676" stroke-width="1.2" stroke-linejoin="round"/>
<rect x="877" y="376" width="12.2" height="26" rx="6" fill="#767676"/>
<path d="M883 967 L890 956.5 H876 Z" fill="#767676" stroke="#767676" stroke-width="1.2" stroke-linejoin="round"/>
<path d="M808 480.6 V491.1 A3.3 3.3 0 0 0 814.6 491.1 V478.6 A5.3 5.3 0 0 0 804 478.6 V491.1 A7.3 7.3 0 0 0 818.6 491.1 V482.6" stroke="#424242" stroke-width="1.5" transform="translate(-1 0)"/>
<path d="M808 920.6 V931.1 A3.3 3.3 0 0 0 814.6 931.1 V918.6 A5.3 5.3 0 0 0 804 918.6 V931.1 A7.3 7.3 0 0 0 818.6 931.1 V922.6" stroke="#424242" stroke-width="1.5" transform="translate(-1 0)"/>
<circle cx="1071.5" cy="418.5" r="7" fill="#fbc71b"/><path d="M1071.5 414.5 V418.5 L1074.5 421.5" stroke="#ffffff" stroke-width="1.5"/>
<circle cx="1326.3" cy="418.5" r="7" fill="#6bb700"/><path d="M1323.0 418.7 L1325.5 421.1 L1329.8 416.5" stroke="#ffffff" stroke-width="1.5"/>
<circle cx="1070.5" cy="446" r="7" fill="#fbc71b"/><path d="M1070.5 442 V446 L1073.5 449" stroke="#ffffff" stroke-width="1.5"/>
<circle cx="1294.6" cy="446" r="7" fill="#6bb700"/><path d="M1291.3 446.2 L1293.8 448.6 L1298.1 444" stroke="#ffffff" stroke-width="1.5"/>
<circle cx="1578.5" cy="376.8" r="11.5" stroke="#242424" stroke-width="1.6"/><circle cx="1574.5" cy="373.5" r="1.4" fill="#242424"/><circle cx="1582.5" cy="373.5" r="1.4" fill="#242424"/><path d="M1572.5 380 Q1578.5 386 1584.5 380" stroke="#242424" stroke-width="1.6"/>
<path d="M1621.5 366 L1615 372.5 L1621.5 379 M1615.5 372.5 H1630 Q1638.5 372.5 1638.5 380.5 Q1638.5 388 1632 388" stroke="#b146c2" stroke-width="1.7" stroke-linejoin="round"/>
<path d="M1669.5 366 L1663 372.5 L1669.5 379 M1674.5 366 L1668 372.5 L1674.5 379 M1668.5 372.5 H1678 Q1686.5 372.5 1686.5 380.5 Q1686.5 388 1680 388" stroke="#b146c2" stroke-width="1.7" stroke-linejoin="round"/>
<path d="M1711 376.3 H1733.5 M1726 368.8 L1733.5 376.3 L1726 383.8" stroke="#1a86d8" stroke-width="1.7"/>
<circle cx="1792.3" cy="369.6" r="3.1" fill="#5059c9"/><path d="M1786 374.5 H1795.3 V382 Q1795.3 386.8 1790 386.8 Q1787 386.8 1786 385 Z" fill="#7b83eb"/><circle cx="1784.5" cy="369" r="4.8" fill="#7b83eb"/><path d="M1776.5 374 H1791.5 V382 Q1791.5 389 1784 389 Q1776.5 389 1776.5 382 Z" fill="#7b83eb"/><rect x="1771" y="369.2" width="15.8" height="15.3" rx="1.3" fill="#4b53bc"/><path d="M1774.8 372.8 H1783 M1778.9 372.8 V381.5" stroke="#ffffff" stroke-width="2"/>
<circle cx="1833.4" cy="376.4" r="2.3" fill="#333333"/>
<circle cx="1842.3" cy="376.4" r="2.3" fill="#333333"/>
<circle cx="1851.2" cy="376.4" r="2.3" fill="#333333"/>
<circle cx="1583.6" cy="488.5" r="10.5" stroke="#0f6cbd" stroke-width="1.6"/><circle cx="1583.6" cy="483" r="1.4" fill="#0f6cbd"/><path d="M1583.6 486.5 V494.5" stroke="#0f6cbd" stroke-width="2"/>
<path d="M1888.8 523.5 L1895.8 534 H1881.8 Z" fill="#767676" stroke="#767676" stroke-width="1.2" stroke-linejoin="round"/>
<rect x="1882.8" y="542.3" width="12" height="36" rx="6" fill="#767676"/>
<path d="M1888.8 966 L1895.8 955.5 H1881.8 Z" fill="#767676" stroke="#767676" stroke-width="1.2" stroke-linejoin="round"/>
<circle cx="947" cy="809.5" r="18.5" fill="#2a8ee6" stroke="#1b3a5a" stroke-width="1.6"/><ellipse cx="947" cy="809.5" rx="8" ry="18.5" stroke="#1b3a5a" stroke-width="1.4"/><path d="M929 801 H965 M929 818 H965 M947 791 V828" stroke="#1b3a5a" stroke-width="1.4"/><rect x="932" y="804" width="30" height="11" rx="2" fill="#f5a800" stroke="#1b3a5a" stroke-width="1.2"/><text x="934.5" y="813" font-family="Liberation Sans" font-size="8.5" font-weight="bold" fill="#1b3a5a">www</text>
<rect x="975.8" y="789.5" width="37.2" height="38.3" rx="2.5" fill="#1a78bc"/><rect x="981.5" y="801" width="5.3" height="21" fill="#ffffff"/><circle cx="984.1" cy="795.8" r="3.1" fill="#ffffff"/><path d="M991.5 822 V801 H996.5 V804 Q999 800.5 1003.5 800.5 Q1009 800.5 1009 808 V822 H1003.8 V809.5 Q1003.8 805.5 1000.5 805.5 Q996.8 805.5 996.8 810 V822 Z" fill="#ffffff"/>
<rect x="1023.3" y="790.5" width="37.7" height="38.8" rx="3" fill="#1e4c8f"/><path d="M1045 829.3 V812.5 H1051 L1052 806 H1045 V802 Q1045 799 1048 799 H1052.3 V793.5 Q1050 793 1046.5 793 Q1038.5 793 1038.5 801.5 V806 H1033 V812.5 H1038.5 V829.3 Z" fill="#ffffff"/>
<defs><linearGradient id="igA" x1="0" y1="1" x2="1" y2="0"><stop offset="0" stop-color="#fdc830"/><stop offset="0.35" stop-color="#f56a2a"/><stop offset="0.65" stop-color="#e8254f"/><stop offset="1" stop-color="#b52bbf"/></linearGradient></defs>
<rect x="1075.5" y="794" width="32.5" height="32.5" rx="9" stroke="url(#igA)" stroke-width="3.5"/><circle cx="1091.7" cy="810.2" r="7.5" stroke="url(#igA)" stroke-width="3.5"/><circle cx="1101" cy="800.8" r="2.2" fill="#c9309a"/>
<circle cx="1144.1" cy="810.2" r="20.1" fill="#000000"/><path d="M1133 798.5 H1140.5 L1155.5 822 H1148 Z" stroke="#ffffff" stroke-width="1.3"/><path d="M1154.5 798.5 L1134 822 M1145.8 806 L1155 798.5" stroke="#ffffff" stroke-width="1.6"/>
<rect x="1178.7" y="791.6" width="46.8" height="33.4" rx="8" fill="#c4070a"/><path d="M1195.5 800.5 L1210.5 808.3 L1195.5 816 Z" fill="#ffffff"/>
<path d="M233 998.5 V990.5 A6.2 6.2 0 0 1 245.5 990.5 V998.5 L247.8 1000.8 H230.6 Z" stroke="#424242" stroke-width="1.4" stroke-linejoin="round"/><path d="M236.5 1001 A2.7 2.7 0 0 0 241.6 1001" stroke="#424242" stroke-width="1.4"/>
<rect x="1554" y="984" width="20" height="16.5" stroke="#424242" stroke-width="1.6"/><path d="M1554 986.8 H1574 M1559.2 986.8 V1000.5 M1568.8 986.8 V1000.5" stroke="#424242" stroke-width="1.5"/>
<path d="M1613.5 983.5 V999.5 H1621 Q1622.8 999.5 1623.2 1001 Q1623.6 999.5 1625.4 999.5 H1633 V983.5 H1625.4 Q1623.6 983.5 1623.2 985 Q1622.8 983.5 1621 983.5 Z M1623.2 985 V1001" stroke="#424242" stroke-width="1.4" stroke-linejoin="round"/><path d="M1616 987.5 H1620.5 M1616 991 H1620.5 M1616 994.5 H1620.5 M1626 987.5 H1630.5 M1626 991 H1630.5 M1626 994.5 H1630.5" stroke="#424242" stroke-width="1"/>
<path d="M38 1027 L48 1029.5 L59 1048 V1058 L38 1061.5 Z" fill="#e8a020"/><path d="M41.5 1031 L50 1033 L56.5 1047 V1055.5 L41.5 1058 Z" fill="#c98410"/>
<path d="M34 1037.8 H51 M34 1045.3 Q47 1043 62.5 1045.3 M34 1052.2 Q47 1050 62.5 1052.2" stroke="#f2bd3c" stroke-width="2.3" stroke-linecap="round"/>
<circle cx="58.6" cy="1030.3" r="11.7" fill="#c42b1c"/><text x="55" y="1036.5" font-family="Liberation Sans" font-size="16" fill="#ffffff">1</text>
<defs><linearGradient id="wnA" x1="0" y1="0" x2="1" y2="1"><stop offset="0" stop-color="#5ed4fc"/><stop offset="1" stop-color="#0669d8"/></linearGradient></defs>
<path d="M434 1028 Q434 1027 435 1027 H450 V1043.5 H434 Z M452 1027 H467 Q468.3 1027 468.3 1028 V1043.5 H452 Z M434 1045.5 H450 V1062 H435 Q434 1062 434 1061 Z M452 1045.5 H468.3 V1061 Q468.3 1062 467 1062 H452 Z" fill="url(#wnA)"/>
<circle cx="516.5" cy="1042.5" r="8" stroke="#1a1a1a" stroke-width="2.2"/><path d="M522.3 1048.3 L528 1054" stroke="#1a1a1a" stroke-width="2.6" stroke-linecap="round"/>
<defs><linearGradient id="tvA" x1="0" y1="0" x2="0" y2="1"><stop offset="0" stop-color="#ffffff"/><stop offset="1" stop-color="#e6e6e6"/></linearGradient><linearGradient id="tvB" x1="0" y1="0" x2="0" y2="1"><stop offset="0" stop-color="#444444"/><stop offset="1" stop-color="#111111"/></linearGradient></defs>
<rect x="837.2" y="1036.5" width="26.7" height="24.1" rx="2" fill="url(#tvB)"/><rect x="845.9" y="1027.4" width="26.8" height="22.8" rx="2" fill="url(#tvA)" fill-opacity="0.92"/><rect x="845.9" y="1036.5" width="18" height="13.7" fill="#b8b8b8"/>
<use href="#copi" transform="translate(903 1027.8) scale(1.5)"/>
<rect x="913" y="1051.2" width="26" height="10.4" rx="1.5" fill="#000000"/><text x="914.8" y="1059.6" font-family="Liberation Sans" font-size="8.6" font-weight="bold" fill="#ffffff">M365</text>
<path d="M969 1030 Q969 1027.8 971 1027.8 H982 L985 1031 H1003 Q1004.7 1031 1004.7 1033 V1060.6 H969 Z" fill="#e6a800"/><path d="M969 1034.5 H1004.7 V1060.6 H969 Z" fill="#ffc83d"/><path d="M974.8 1052.5 Q974.8 1050 977.5 1050 H996.5 Q999 1050 999 1052.5 V1060.6 H974.8 Z" fill="#1b87d8"/><path d="M981 1055 H993" stroke="#0b4c8c" stroke-width="1.3"/>
<path d="M1044 1031 H1062 L1064 1048 H1046 Z" fill="#f4f4f4" stroke="#a8a8a8" stroke-width="0.8"/><path d="M1048 1036 H1058 M1049 1040 H1059 M1049 1043.5 H1056" stroke="#7a9cc8" stroke-width="1"/><rect x="1036" y="1043" width="10" height="10" fill="#c8b898"/><path d="M1045 1050 L1062 1047 L1068 1053 L1052 1057 Z" fill="#7a7a7a"/><rect x="1062" y="1043" width="7" height="9" fill="#d8c8b0"/>
<defs><linearGradient id="tmA" x1="0" y1="0" x2="1" y2="1"><stop offset="0" stop-color="#7b84ee"/><stop offset="1" stop-color="#5b5fc7"/></linearGradient></defs>
<circle cx="1113.7" cy="1031.5" r="5" fill="#8f95f0"/><path d="M1119 1040 H1133 Q1134.5 1040 1134.5 1042 V1054 Q1134.5 1060 1128 1060 H1121 Z" fill="#6e71df"/><path d="M1104 1040 H1124 V1054 Q1124 1060.5 1117 1060.5 H1111 Q1104 1060.5 1104 1054 Z" fill="url(#tmA)"/><rect x="1100.8" y="1043" width="15" height="13.7" rx="2" fill="#4b53bc"/><path d="M1104.3 1046.8 H1112.3 M1108.3 1046.8 V1053.8" stroke="#ffffff" stroke-width="2.2"/>
<circle cx="1133.7" cy="1030.8" r="12" fill="#c42b1c"/><text x="1124.5" y="1037" font-family="Liberation Sans" font-size="15.5" fill="#ffffff">9+</text>
<defs><linearGradient id="edA" x1="0" y1="0" x2="1" y2="1"><stop offset="0" stop-color="#35c1f1"/><stop offset="0.6" stop-color="#3bb8d8"/><stop offset="1" stop-color="#66eb6e"/></linearGradient><linearGradient id="edB" x1="0" y1="0" x2="1" y2="1"><stop offset="0" stop-color="#0c59a4"/><stop offset="1" stop-color="#114a8b"/></linearGradient></defs>
<path d="M1185 1025.8 Q1201 1025.8 1203 1041 Q1203.5 1049 1196 1050 Q1188 1050.5 1185.5 1046 Q1193 1044 1191 1039 Q1188 1034 1180 1035 Q1170 1037 1167.5 1047 Q1167 1030 1185 1025.8 Z" fill="url(#edA)"/>
<path d="M1167.5 1047 Q1169 1036 1180 1035 Q1188 1034.5 1190 1039 Q1180 1037.5 1177 1046 Q1176 1056 1190 1058.5 Q1196 1059 1200 1056.5 Q1194 1062.5 1185 1062 Q1169.5 1061 1167.5 1047 Z" fill="#1490df"/>
<path d="M1177 1046 Q1180 1037.5 1190 1039 Q1183 1041 1183.5 1047.5 Q1185 1056 1200 1056.5 Q1193 1061 1186 1060 Q1176 1058 1177 1046 Z" fill="url(#edB)"/>
<rect x="1243" y="1028" width="24" height="32" rx="1.5" fill="#0a64c8"/><rect x="1255" y="1028" width="12" height="11" fill="#50d9ff"/><rect x="1243" y="1028" width="12" height="11" fill="#0f78d4"/><rect x="1255" y="1039" width="12" height="8" fill="#28a8ea"/><path d="M1244 1046 H1268 V1060 H1244 Z" fill="#1490df"/><path d="M1246 1060 L1268 1044 V1060 Z" fill="#28a8ea"/><rect x="1233" y="1035" width="18" height="18" rx="1.5" fill="#0f6cbd"/><ellipse cx="1242" cy="1044" rx="4.6" ry="5" stroke="#ffffff" stroke-width="2.4"/>
<circle cx="1317" cy="1043.8" r="18" fill="#db4437"/><path d="M1317 1043.8 L1301.4 1034.8 A18 18 0 0 0 1308 1059.4 Z" fill="#0f9d58"/><path d="M1317 1043.8 L1308 1059.4 A18 18 0 0 0 1335 1043.8 Z" fill="#0f9d58"/><path d="M1317 1043.8 L1335 1043.8 A18 18 0 0 1 1317 1061.8 L1308 1059.4 Z" fill="#ffcd40"/><path d="M1317 1034.8 H1332.6 A18 18 0 0 1 1335 1043.8 L1326 1043.8 Z" fill="#ffcd40"/><path d="M1317 1034.8 H1332.6 A18 18 0 0 0 1301.4 1034.8 L1309.2 1048.3 Z" fill="#db4437"/><path d="M1301.4 1034.8 L1309.2 1048.3 L1317 1061.8 A18 18 0 0 1 1301.4 1034.8 Z" fill="#0f9d58"/><path d="M1326 1043.8 L1317 1061.8 A18 18 0 0 0 1335 1043.8 Z" fill="#ffcd40"/><circle cx="1317" cy="1043.8" r="9.2" fill="#ffffff"/><circle cx="1317" cy="1043.8" r="7.3" fill="#3b78e7"/>
<rect x="1373" y="1028" width="27" height="32" rx="1.5" fill="#21a366"/><rect x="1386" y="1028" width="14" height="8" fill="#33c481"/><rect x="1373" y="1044" width="27" height="8" fill="#107c41"/><rect x="1373" y="1052" width="27" height="8" fill="#185c37"/><rect x="1365" y="1035" width="18" height="18" rx="1.5" fill="#107c41"/><path d="M1369.5 1039 L1378.5 1049 M1378.5 1039 L1369.5 1049" stroke="#ffffff" stroke-width="2.4"/>
<path d="M1519 1048.5 L1527 1039.5 L1535 1048.5" stroke="#1a1a1a" stroke-width="1.6"/>
<path d="M1566 1047 A5 5 0 0 1 1571 1039 A7 7 0 0 1 1583 1042 A5 5 0 0 1 1583 1052.5 H1567 A3.5 3.5 0 0 1 1566 1047 Z" fill="#0f78d4"/><path d="M1563 1050 A4 4 0 0 1 1567 1045 L1580 1048 L1572 1052.5 H1566 A3 3 0 0 1 1563 1050 Z" fill="#1490df"/><path d="M1570 1052.5 L1581 1044 A4.5 4.5 0 0 1 1587 1049 A4 4 0 0 1 1583 1052.5 Z" fill="#28a8ea"/>
<path d="M1677.5 1040 Q1689 1029.5 1700.5 1040 M1681 1043.5 Q1689 1036 1697 1043.5 M1684.5 1047 Q1689 1043 1693.5 1047" stroke="#1a1a1a" stroke-width="1.6"/><circle cx="1689" cy="1050.5" r="1.8" fill="#1a1a1a"/>
<path d="M1713 1041 H1717.5 L1723.5 1036.5 V1053 L1717.5 1048.5 H1713 Z" stroke="#1a1a1a" stroke-width="1.5" stroke-linejoin="round"/><path d="M1727 1040.5 Q1729.5 1044.8 1727 1049 M1730.5 1038 Q1734.5 1044.8 1730.5 1051.5" stroke="#1a1a1a" stroke-width="1.5"/><path d="M1734 1036 Q1739 1044.8 1734 1053.5" stroke="#9a9a9a" stroke-width="1.2"/>
<rect x="1750" y="1038.3" width="19.5" height="12.5" rx="2.5" stroke="#1a1a1a" stroke-width="1.6"/><rect x="1752.5" y="1040.8" width="14.5" height="7.5" rx="1" fill="#1a1a1a"/><path d="M1771.2 1042 V1047" stroke="#1a1a1a" stroke-width="2.2"/></svg>
</body></html>
